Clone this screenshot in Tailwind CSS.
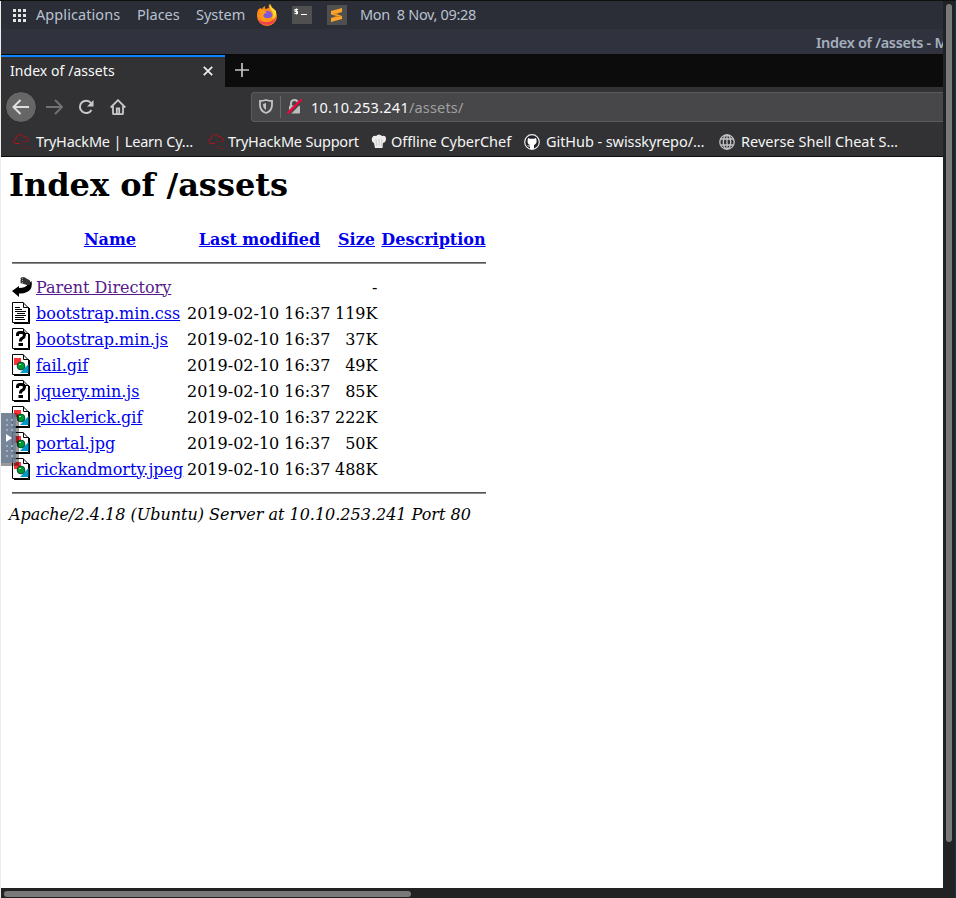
<!DOCTYPE html>
<html lang="en">
<head>
<meta charset="utf-8">
<title>Index of /assets</title>
<script src="https://cdn.jsdelivr.net/npm/@tailwindcss/browser@4"></script>
</head>
<body class="w-[956px] h-[898px] overflow-hidden bg-[#222] font-['Noto_Sans',sans-serif]">
<svg class="hidden">
  <defs>
    <g id="sheet"><path d="M2 21V22H18V6H17V21Z" fill="#000"/><path d="M.5 .5H11L16.500 6V20.500H.5Z" fill="#fff" stroke="#000"/><path d="M11.500 .5V5.500H17" fill="none" stroke="#000"/></g>
    <g id="text"><use href="#sheet"/><path d="M3 5.500H8M3 7.500H10M3 9.500H14M5 11.500H13M3 13.500H14M3 15.500H12M3 17.500H13" stroke="#000"/></g>
    <g id="unknown"><use href="#sheet"/><path d="M5.500 8V6.500Q5.500 4.500 8 4.500H9.500Q12.500 4.500 12.500 7Q12.500 9 10 10.500Q8.500 11 8.500 13.500" fill="none" stroke="#000" stroke-width="3"/><path d="M6.500 15h4.500v3H6.500z"/></g>
    <g id="image"><use href="#sheet"/><path d="M2 4H9V11H2Z" fill="#f33"/><path d="M16.500 10V19H8Z" fill="#09c"/><circle cx="9" cy="12" r="3.900" fill="#093" stroke="#033" stroke-width=".8"/><path d="M7 10.500h2" stroke="#9f9"/></g>
    <g id="cloud" fill="none" stroke="#b5121b"><path d="M7 9.500H3C0 9 0 5 3 5C3.500 -.5 9.500 -.5 11 3C14 2 16 5 14.500 7"/><path d="M8 7.500H16M8 12.500H12M12 14.500H16" stroke-dasharray="2 .6" stroke="#80191f"/></g>
  </defs>
</svg>
<div class="flex h-[888px] w-[956px] border-t border-[#101010]">
  <main class="flex h-[887px] w-[943px] shrink-0 flex-col overflow-hidden border-l border-[#ededed] bg-white relative">
    <!-- Desktop panel -->
    <div class="flex h-7 shrink-0 items-center bg-[#2b2d37] text-[14.500px] leading-[26px] text-[#b9c2d0] whitespace-nowrap">
      <svg class="ml-3 w-[13px] h-[13px] shrink-0 mr-[10px]" viewBox="0 0 13 13" fill="#e4e4e4"><path d="M0 0h3v3H0zM5 0h3v3H5zM10 0h3v3h-3zM0 5h3v3H0zM5 5h3v3H5zM10 5h3v3h-3zM0 10h3v3H0zM5 10h3v3H5zM10 10h3v3h-3z"/></svg>
      <span class="-mt-[2px] w-[101px] shrink-0 tracking-[0.080px]">Applications</span>
      <span class="-mt-[2px] w-[59px] shrink-0">Places</span>
      <span class="-mt-[2px] w-[60px] shrink-0">System</span>
      <svg class="w-[22px] h-[22px] shrink-0" viewBox="0 0 22 22"><path d="M2 6L4 4L6 5Q7 3 9 2V5L13 4Q12 1 14 0Q15 3 18 5Q21 8 21 12A10 10 0 0 1 1 12Q1 8 2 6Z" fill="#ff8a16"/><path d="M14 0Q13 4 16 7Q19 12 15 15Q21 14 20 7Q18 5 16 4Z" fill="#ffdc35"/><path d="M1 12Q2 17 8 18Q15 19 20 14Q18 21 11 21Q3 21 1 12Z" fill="#f43d55"/><circle cx="11.500" cy="11.500" r="4.700" fill="#8058d8"/><path d="M4 5Q7 5 8 7L11 8L8 10Q6 13 10 14Q15 15 17 11Q17 18 10 18Q3 17 4 5Z" fill="#ff9a18"/></svg>
      <svg class="ml-[14px] w-5 h-[18px] shrink-0" viewBox="0 0 20 18"><path fill="#505050" d="M0 0h20v18H0z"/><path d="M6 3.500H3V5.500H5.500V7.500H2.500M4.500 2.500v6M9 8.500h6" fill="none" stroke="#fff" stroke-width="1.100"/></svg>
      <svg class="ml-[15px] w-5 h-5 shrink-0" viewBox="0 0 20 20"><path fill="#4f4f4f" d="M0 0h20v20H0z"/><path fill="#ffa42a" d="M4 6L15 3V7L9 9L15 11V14L4 17V13L10 11L4 9.500Z"/><path d="M4 9.500L15 7L9 9ZM15 11L4 13L10 11Z" fill="#c77417"/></svg>
      <span class="-mt-[2px] ml-[13px] tracking-[-0.320px]">Mon&nbsp; 8 Nov, 09:28</span>
    </div>
    <!-- Window title -->
    <div class="h-[25px] shrink-0 bg-[#30333e] pl-[815px] text-[14.500px] leading-[27px] font-semibold text-[#a5afbd] whitespace-nowrap"><span class="tracking-[-0.300px]">Index of /assets - Mozilla Firefox</span></div>
    <!-- Tab strip -->
    <div class="flex h-[33px] shrink-0 border-t border-[#080808] bg-[#0c0c0d]">
      <div class="flex w-56 items-center border-t-2 border-[#0a84ff] bg-[#323234] pl-[9px] text-[14px] text-[#f9f9fa]">
        <span class="-mt-[3px] w-[193px] tracking-[0.060px]">Index of /assets</span>
        <svg class="-mt-[2px] w-[10px] h-[10px]" viewBox="0 0 10 10" stroke="#f0f0f0" stroke-width="1.700"><path d="M.8.8L9.200 9.200M9.200.8L.8 9.200"/></svg>
      </div>
      <svg class="ml-[10px] mt-2 w-[14px] h-[14px]" viewBox="0 0 14 14" stroke="#c4c4c5" stroke-width="1.700"><path d="M7 0v14M0 7h14"/></svg>
    </div>
    <!-- Navigation bar -->
    <div class="flex h-[39px] shrink-0 items-center bg-[#323234]">
      <svg class="ml-1 w-8 h-8 shrink-0" viewBox="0 0 32 32" fill="none"><circle cx="16" cy="16" r="15.500" fill="#666667" stroke="#282829"/><path d="M24 16H9M15.500 9L8.500 16L15.500 23" stroke="#dedede" stroke-width="2"/></svg>
      <svg class="ml-2 w-[18px] h-4 shrink-0" viewBox="0 0 18 16" fill="none" stroke="#717172" stroke-width="2"><path d="M1 8H16M10 1L17 8L10 15"/></svg>
      <svg class="ml-[15px] w-4 h-4 shrink-0" viewBox="0 0 16 16" fill="none"><path d="M13.500 11A6.200 6.200 0 1 1 13 4" stroke="#c9c9ca" stroke-width="2"/><path d="M15.500 1V7.500H9Z" fill="#c9c9ca"/></svg>
      <svg class="ml-4 w-4 h-4 shrink-0" viewBox="0 0 16 16" fill="none" stroke="#c9c9ca" stroke-width="1.800"><path d="M.7 8.500L8 1.200L15.300 8.500M3 7V14.500Q3 15.100 3.600 15.100H12.400Q13 15.100 13 14.500V7"/><path d="M6.800 15V9.500H9.200V15"/></svg>
      <div class="ml-[125px] flex h-[30px] w-[720px] shrink-0 items-center rounded-[3px] border border-[#5b5b5d] bg-[#474749] text-[14.500px] tracking-[0.170px]">
        <svg class="ml-[7px] w-[14px] h-[15px]" viewBox="0 0 14 15"><path d="M1 2Q4 2 7 1Q10 2 13 2V6Q13 12 7 14Q1 12 1 6Z" fill="none" stroke="#c4c4c5" stroke-width="1.800"/><path d="M7 4V11Q4 9.500 4 5Z" fill="#c4c4c5"/></svg>
        <span class="ml-[7px] mr-[6px] h-[22px] w-px bg-[#656b75]"></span>
        <svg class="mr-[9px] w-[15px] h-[15px]" viewBox="0 0 15 15"><path d="M4 7V4.500Q4 1 7.500 1Q11 1 11 4.500V7" fill="none" stroke="#bdbdbe" stroke-width="2"/><rect x="2" y="6.500" width="11" height="8" rx="1" fill="#bdbdbe"/><path d="M1 15L15 1" stroke="#474749" stroke-width="4"/><path d="M.5 14.500L14.500 .5" stroke="#ff0039" stroke-width="2"/></svg>
        <span class="pt-[2px] text-[#f9f9fa] tracking-[0.260px]">10.10.253.241</span><span class="pt-[2px] text-[#a0a0a1]">/assets/</span>
      </div>
    </div>
    <!-- Bookmarks -->
    <div class="flex h-[31px] shrink-0 items-center border-b border-[#0c0c0d] bg-[#323234] pl-3 pt-[2px] text-[14.500px] text-[#f5f5f6] whitespace-nowrap">
      <svg class="w-4 h-4 shrink-0" viewBox="0 0 16 16"><use href="#cloud"/></svg>
      <span class="ml-[7px] w-[172px] shrink-0 tracking-[-0.200px]">TryHackMe | Learn Cy…</span>
      <svg class="w-4 h-4 shrink-0" viewBox="0 0 16 16"><use href="#cloud"/></svg>
      <span class="ml-1 w-[143px] shrink-0 tracking-[-0.200px]">TryHackMe Support</span>
      <svg class="w-4 h-4 shrink-0" viewBox="0 0 16 16"><path d="M3 9Q0 8 1 4Q2 1 5 2Q8-1 11 2Q15 1 15 5Q15 8 12 9L11.500 14H4Z" fill="#ededed"/><path d="M5 5L5.500 12M8 5V12M11 5L10.500 12" stroke="#ccc"/></svg>
      <span class="ml-1 w-[133px] shrink-0 tracking-[-0.030px]">Offline CyberChef</span>
      <svg class="w-4 h-4 shrink-0" viewBox="0 0 16 16"><circle cx="8" cy="8" r="7.300" fill="#22232a" stroke="#eee" stroke-width="1.200"/><path d="M4 4L6 4.800H10L12 4Q13.500 8 11.500 10Q10.500 11 10 11V15H6V12.500Q4 13 3 11Q5 12 6 11Q2.500 10 4 4Z" fill="#fff"/></svg>
      <span class="ml-[6px] w-[173px] shrink-0 tracking-[-0.070px]">GitHub - swisskyrepo/…</span>
      <svg class="w-4 h-4 shrink-0" viewBox="0 0 16 16" fill="none" stroke="#c4c4c5" stroke-width="1.300"><circle cx="8" cy="8" r="7.200"/><ellipse cx="8" cy="8" rx="3.700" ry="7.200"/><path d="M2 5H14M2 11H14M8 1V15"/></svg>
      <span class="ml-[6px] tracking-[0.020px]">Reverse Shell Cheat S…</span>
    </div>
    <!-- Directory listing -->
    <section class="pl-2 font-['DejaVu_Serif',serif] text-[16px] leading-[19px] text-black">
      <h1 class="pt-[9px] text-[32px] leading-[38px] font-bold">Index of /assets</h1>
      <div class="ml-[3px] w-[474px]">
        <div class="mt-[26px] grid grid-cols-[24px_148px_4px_143px_4px_43px_3px_105px] text-center font-bold text-[#0000ee] underline">
          <span class="col-start-2">Name</span><span class="col-start-4">Last modified</span><span class="col-start-6">Size</span><span class="col-start-8">Description</span>
        </div>
        <div class="mt-[13px] mb-[10px] h-[2px] border-t border-b border-t-[#555] border-b-[#8b8b8b]"></div>
        <div id="rows"></div>
        <div class="mt-[10px] h-[2px] border-t border-b border-t-[#555] border-b-[#8b8b8b]"></div>
      </div>
      <address class="mt-[11px] italic">Apache/2.4.18 (Ubuntu) Server at 10.10.253.241 Port 80</address>
    </section>
    <!-- Side handle of the remote desktop viewer -->
    <svg class="absolute left-0 top-[412px] w-[18px] h-[53px]" viewBox="0 0 18 53"><path d="M0 0H14Q18 0 18 5V53H0Z" fill="#000" fill-opacity=".4"/><path d="M0 0H12Q15 0 15 4V50H0Z" fill="#6e7f99" fill-opacity=".8"/><path d="M5 7H12M5 12H12M5 17H12M5 33H12M5 38H12M5 43H12" stroke="#a2adbd" stroke-width="2" stroke-dasharray="2 3"/><path d="M5 21L11 25L5 29Z" fill="#fff"/></svg>
  </main>
  <div class="w-3 bg-[#222] pl-[3px] pt-[3px]"><div class="h-[838px] w-[6px] rounded-full bg-[#797979]"></div></div>
  <div class="h-[898px] w-px shrink-0 bg-[#0b3b49]"></div>
</div>
<div class="h-[10px] bg-[#222] border-l border-[#ededed] pl-[3px] pt-[3px]"><div class="h-[6px] w-[407px] rounded-full bg-[#797979]"></div></div>
<script>
const files = [["text","bootstrap.min.css","119K"],["unknown","bootstrap.min.js","37K"],["image","fail.gif","49K"],["unknown","jquery.min.js","85K"],["image","picklerick.gif","222K"],["image","portal.jpg","50K"],["image","rickandmorty.jpeg","488K"]];
const row = (icon, name, color, date, size) => `<div class="grid h-[26px] grid-cols-[24px_151px_143px_47.500px] items-center whitespace-nowrap">${icon}<a class="underline ${color}">${name}</a><span>${date}</span><span class="text-right">${size}</span></div>`;
const back = `<svg class="w-5 h-[22px]" viewBox="0 0 20 22"><path d="M0 15L7 10V12Q14 12 16 8L19.500 5Q21 14 15 16Q11 18 7 17.500V21Z" fill="#000"/><path d="M9 1.500L12 1L18 4.500V9L15 9L8.500 7Z" fill="#333"/><path d="M8.500 2V7M10.500 2V7" stroke="#999" stroke-dasharray="1 1"/></svg>`;
document.getElementById("rows").innerHTML = row(back, "Parent Directory", "text-[#551a8b]", "", "-") +
  files.map(f => row(`<svg class="w-[18px] h-[22px]" viewBox="0 0 18 22"><use href="#${f[0]}"/></svg>`, f[1], "text-[#0000ee]", "2019-02-10 16:37", f[2])).join("");
</script>
</body>
</html>
